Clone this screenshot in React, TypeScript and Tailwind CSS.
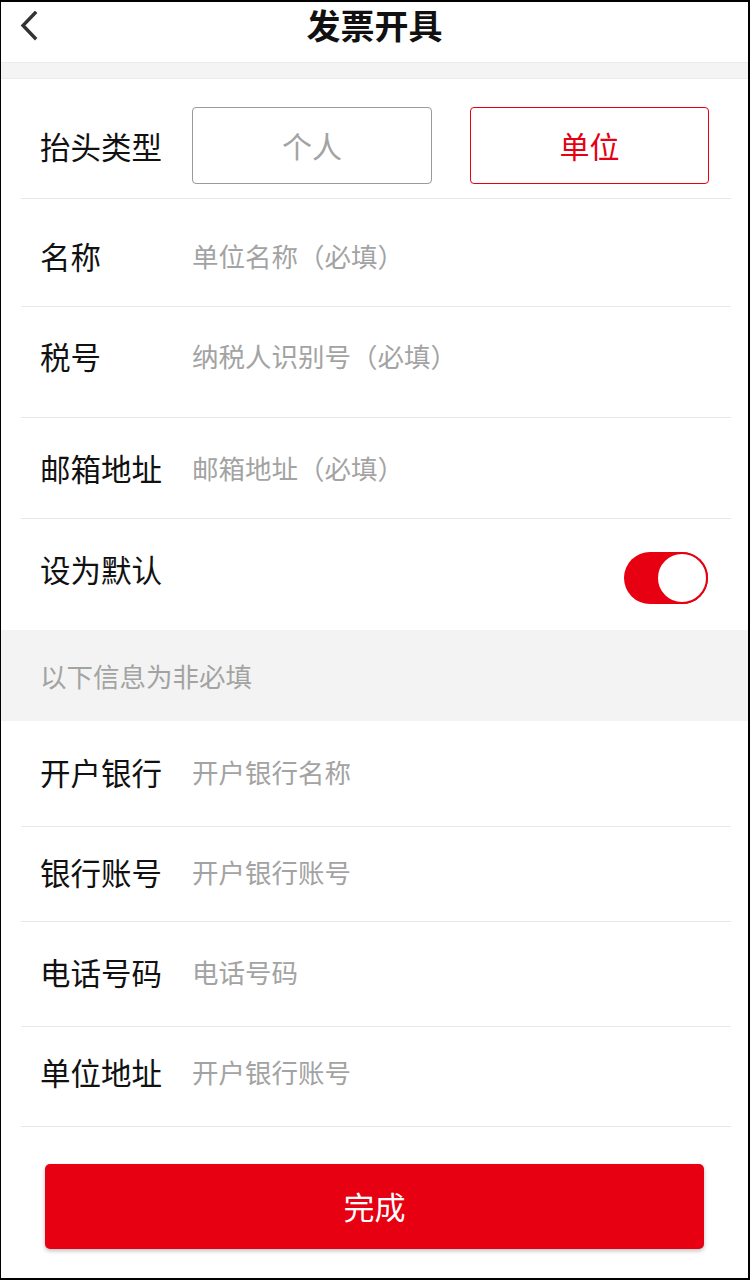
import { useState } from 'react'

const font = { fontFamily: '"Noto Sans CJK SC", "Noto Sans", sans-serif' }

function FieldRow({ label, placeholder, rowClass }: { label: string; placeholder: string; rowClass: string }) {
  return (
    <div className={`ml-[20px] mr-[17px] flex shrink-0 items-start border-b border-[#e8e8e8] ${rowClass}`}>
      <div className="w-[171px] shrink-0 pl-[19px] text-[30.5px] leading-[40px] text-[#111]">{label}</div>
      <div className="text-[26.5px] leading-[40px] text-[#a3a3a3]">{placeholder}</div>
    </div>
  )
}

export default function App() {
  const [type, setType] = useState<'person' | 'company'>('company')
  const [isDefault, setIsDefault] = useState(true)

  return (
    <div
      className="box-border flex h-[1280px] w-[750px] flex-col overflow-hidden border-b-2 border-l border-r-2 border-t-2 border-black bg-white"
      style={font}
    >
      {/* Header */}
      <div className="relative flex h-[60px] shrink-0 items-center justify-center pb-[14px]">
        <button className="absolute left-[16px] top-[7px] p-[2px]">
          <svg width="20" height="30" viewBox="0 0 20 30" fill="none">
            <path d="M16 2 L4 14.5 L16 27" stroke="#333" strokeWidth="3.4" strokeLinecap="square" />
          </svg>
        </button>
        <h1 className="text-[34px] font-bold leading-none text-[#111]">发票开具</h1>
      </div>
      <div className="h-[17px] shrink-0 border-y border-[#ebebeb] bg-[#f4f4f4]" />

      {/* Title type */}
      <div className="ml-[20px] mr-[17px] flex h-[120px] shrink-0 items-center border-b border-[#e8e8e8] pt-[14px]">
        <div className="w-[171px] shrink-0 pl-[19px] text-[30.5px] leading-[40px] text-[#111]">抬头类型</div>
        <div className="flex gap-[38px]">
          <button
            onClick={() => setType('person')}
            className={`flex h-[77px] w-[240px] items-center justify-center rounded-[4px] border text-[30px] ${
              type === 'person' ? 'border-[#e60012] text-[#e60012]' : 'border-[#9a9a9a] text-[#a3a3a3]'
            }`}
          >
            个人
          </button>
          <button
            onClick={() => setType('company')}
            className={`flex h-[77px] w-[239px] items-center justify-center rounded-[4px] border text-[30px] ${
              type === 'company' ? 'border-[#e60012] text-[#e60012]' : 'border-[#9a9a9a] text-[#a3a3a3]'
            }`}
          >
            单位
          </button>
        </div>
      </div>

      <FieldRow label="名称" placeholder="单位名称（必填）" rowClass="h-[108px] pt-[37px]" />
      <FieldRow label="税号" placeholder="纳税人识别号（必填）" rowClass="h-[111px] pt-[29px]" />
      <FieldRow label="邮箱地址" placeholder="邮箱地址（必填）" rowClass="h-[101px] pt-[30px]" />

      {/* Default switch */}
      <div className="mx-[20px] flex h-[111px] shrink-0 items-start pt-[30px]">
        <div className="flex-1 pl-[19px] text-[30.5px] leading-[40px] text-[#111]">设为默认</div>
        <button
          onClick={() => setIsDefault(!isDefault)}
          className={`mt-[3px] mr-[20px] flex h-[52px] w-[84px] items-center rounded-full ${
            isDefault ? 'justify-end bg-[#e60012]' : 'justify-start bg-[#e5e5e5]'
          }`}
        >
          <span
            className={`block h-[52px] w-[52px] rounded-full border-2 bg-white ${
              isDefault ? 'border-[#e60012]' : 'border-[#e5e5e5]'
            }`}
          />
        </button>
      </div>

      {/* Optional section */}
      <div className="flex h-[91px] shrink-0 items-center bg-[#f3f3f3] pl-[39px] text-[26.5px] text-[#a3a3a3]">
        以下信息为非必填
      </div>

      <FieldRow label="开户银行" placeholder="开户银行名称" rowClass="h-[106px] pt-[31px]" />
      <FieldRow label="银行账号" placeholder="开户银行账号" rowClass="h-[95px] pt-[25px]" />
      <FieldRow label="电话号码" placeholder="电话号码" rowClass="h-[105px] pt-[30px]" />
      <FieldRow label="单位地址" placeholder="开户银行账号" rowClass="h-[100px] pt-[25px]" />

      {/* Submit */}
      <div className="px-[44px] pt-[37px]">
        <button className="flex h-[85px] w-full items-center justify-center rounded-[5px] bg-[#e60012] text-[31px] text-white shadow-[0_2px_4px_rgba(0,0,0,0.25)]">
          完成
        </button>
      </div>
    </div>
  )
}
